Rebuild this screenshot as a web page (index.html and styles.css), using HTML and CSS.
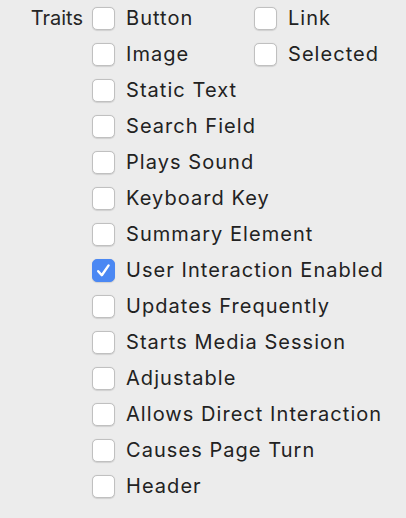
FILE: index.html
```html
<!DOCTYPE html>
<html>
<head>
<meta charset="utf-8">
<link rel="stylesheet" href="styles.css">
</head>
<body>
<div class="panel">
  <div class="label">Traits</div>
  <div class="grid">
    <div class="item"><span class="box"></span><span class="text">Button</span></div>
    <div class="item"><span class="box"></span><span class="text">Link</span></div>
    <div class="item"><span class="box"></span><span class="text">Image</span></div>
    <div class="item"><span class="box"></span><span class="text">Selected</span></div>
    <div class="item full"><span class="box"></span><span class="text">Static Text</span></div>
    <div class="item full"><span class="box"></span><span class="text">Search Field</span></div>
    <div class="item full"><span class="box"></span><span class="text">Plays Sound</span></div>
    <div class="item full"><span class="box"></span><span class="text">Keyboard Key</span></div>
    <div class="item full"><span class="box"></span><span class="text">Summary Element</span></div>
    <div class="item full"><span class="box checked"><svg viewBox="0 0 23 23" width="23" height="23"><path d="M6.2 12.2 L9.8 16.2 L16.6 6.4" fill="none" stroke="#fff" stroke-width="2.4" stroke-linecap="round" stroke-linejoin="round"/></svg></span><span class="text">User Interaction Enabled</span></div>
    <div class="item full"><span class="box"></span><span class="text">Updates Frequently</span></div>
    <div class="item full"><span class="box"></span><span class="text">Starts Media Session</span></div>
    <div class="item full"><span class="box"></span><span class="text">Adjustable</span></div>
    <div class="item full"><span class="box"></span><span class="text">Allows Direct Interaction</span></div>
    <div class="item full"><span class="box"></span><span class="text">Causes Page Turn</span></div>
    <div class="item full"><span class="box"></span><span class="text">Header</span></div>
  </div>
</div>
</body>
</html>
```
FILE: styles.css
```css
html, body {
  margin: 0;
  padding: 0;
  background: #ececec;
}
body {
  width: 406px;
  height: 518px;
  overflow: hidden;
  font-family: Inter, "Liberation Sans", Arial, sans-serif;
  font-size: 20px;
  letter-spacing: 1.05px;
  color: #222222;
}
.panel {
  display: flex;
  align-items: flex-start;
}
.label {
  width: 83px;
  text-align: right;
  height: 36px;
  line-height: 36px;
  letter-spacing: 0;
  color: #262626;
}
.grid {
  margin-left: 9px;
  display: grid;
  grid-template-columns: 162px auto;
  grid-auto-rows: 36px;
}
.item {
  display: flex;
  align-items: center;
}
.item.full {
  grid-column: 1 / 3;
}
.box {
  width: 21px;
  height: 21px;
  border: 1px solid #c0c0c0;
  border-radius: 5px;
  background: #fff;
  box-shadow: 0 0.5px 1px rgba(0,0,0,0.12);
  flex: none;
  position: relative;
}
.box.checked {
  background: #4b88f3;
  border-color: #4b88f3;
}
.box.checked svg {
  position: absolute;
  left: -1px;
  top: -1px;
}
.text {
  margin-left: 11px;
  white-space: nowrap;
}
```
